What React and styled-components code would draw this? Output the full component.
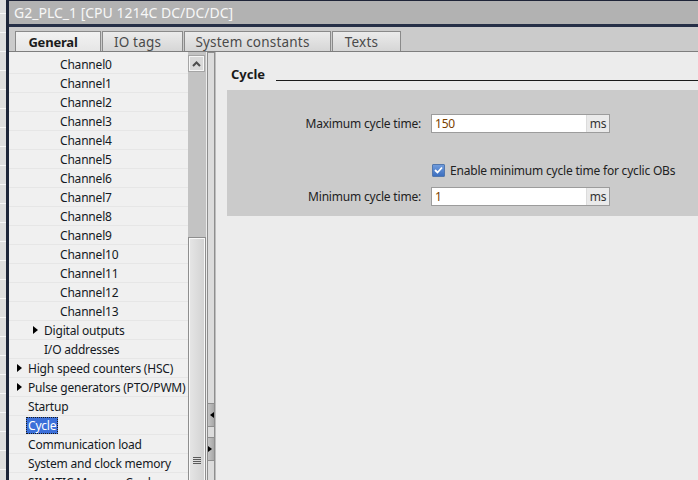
import React from 'react';
import styled, { createGlobalStyle } from 'styled-components';

const GlobalStyle = createGlobalStyle`
  html, body {
    margin: 0;
    padding: 0;
    overflow: hidden;
    background: #ececec;
  }
  body {
    font-family: "Noto Sans", "Open Sans", sans-serif;
    font-size: 12px;
    letter-spacing: -0.2px;
  }
`;

const Screen = styled.div`
  display: flex;
  width: 698px;
  height: 480px;
  overflow: hidden;
`;

const OuterStrip = styled.div`
  width: 6px;
  flex-shrink: 0;
  background: repeating-linear-gradient(
    to bottom,
    #dedede 0px,
    #dedede 18px,
    #f7f7f7 18px,
    #f7f7f7 19px
  );
  background-position: 0 -5px;
`;

const Window = styled.div`
  flex: 1;
  display: flex;
  flex-direction: column;
  border-left: 3px solid #1d2538;
  min-width: 0;
`;

const TitleBar = styled.div`
  height: 23px;
  border-top: 1px solid #1e2438;
  border-bottom: 3px solid #262f47;
  background: #b2b2b2;
  color: #f7f7f7;
  font-size: 14px;
  letter-spacing: 0;
  line-height: 23px;
  padding-left: 5px;
  white-space: nowrap;
`;

const TabStrip = styled.div`
  height: 24px;
  background: #cbcbcb;
  border-bottom: 1px solid #7e7e7e;
  display: flex;
  align-items: flex-end;
  padding-left: 6px;
`;

const Tab = styled.div`
  height: 20px;
  width: ${(p) => p.$w}px;
  box-sizing: border-box;
  border: 1px solid #8a8a8a;
  border-bottom: none;
  margin-right: 1px;
  padding-right: 10px;
  text-align: center;
  line-height: 20px;
  font-size: ${(p) => (p.$active ? 13 : 13.5)}px;
  letter-spacing: ${(p) => (p.$active ? -0.2 : 0.2)}px;
  color: ${(p) => (p.$active ? '#1b1b1b' : '#4a4a4a')};
  font-weight: ${(p) => (p.$active ? 700 : 400)};
  background: ${(p) =>
    p.$active
      ? 'linear-gradient(#f2f2f2, #e6e6e6)'
      : 'linear-gradient(#ebebeb, #d6d6d6)'};
  white-space: nowrap;
`;

const Body = styled.div`
  flex: 1;
  display: flex;
  min-height: 0;
`;

const Tree = styled.div`
  width: 179px;
  flex-shrink: 0;
  background: #f0f0f0;
  padding-top: 3px;
  overflow: hidden;
`;

const Row = styled.div`
  height: 18px;
  border-bottom: 1px solid #e6e6e6;
  display: flex;
  align-items: center;
  padding-left: ${(p) => 8 + p.$level * 16}px;
  color: #141923;
  white-space: nowrap;
`;

const Expander = styled.span`
  width: 11px;
  flex-shrink: 0;
  display: flex;
  align-items: center;
`;

const Label = styled.span`
  padding: 0 1px;
  line-height: 15px;
  border: 1px dotted ${(p) => (p.$selected ? '#1a1a1a' : 'transparent')};
  background: ${(p) => (p.$selected ? '#3b6fd9' : 'transparent')};
  color: ${(p) => (p.$selected ? '#ffffff' : 'inherit')};
  margin-left: -2px;
`;

const ScrollBar = styled.div`
  width: 18px;
  flex-shrink: 0;
  background: #c3c3c3;
  display: flex;
  flex-direction: column;
  padding-top: 3px;
  box-sizing: border-box;
`;

const UpButton = styled.div`
  height: 17px;
  box-sizing: border-box;
  border: 1px solid #a5a5a5;
  box-shadow: inset 0 0 0 1px #f6f6f6;
  background: #d9d9d9;
  display: flex;
  align-items: center;
  justify-content: center;
  margin-right: 1px;
`;

const Track = styled.div`
  height: 165px;
`;

const Thumb = styled.div`
  flex: 1;
  box-sizing: border-box;
  border: 1px solid #8e8e8e;
  border-bottom: none;
  box-shadow: inset 1px 1px 0 #f8f8f8, inset -1px 0 0 #f8f8f8;
  background: linear-gradient(to right, #e6e6e6, #d2d2d2);
  display: flex;
  align-items: flex-end;
  justify-content: center;
  padding-bottom: 16px;
`;

const Grip = styled.div`
  width: 8px;
  height: 7px;
  background: repeating-linear-gradient(
    to bottom,
    #5a5a5a 0px,
    #5a5a5a 1px,
    transparent 1px,
    transparent 2px
  );
`;

const Splitter = styled.div`
  width: 6px;
  flex-shrink: 0;
  margin-left: 1px;
  border: 1px solid #8e8e8e;
  border-bottom: none;
  background: #dcdcdc;
  display: flex;
  flex-direction: column;
  padding-top: 350px;
`;

const SplitArrow = styled.div`
  height: 22px;
  background: linear-gradient(to right, #c4c4c4, #a8a8a8);
  border-top: 1px solid #8e8e8e;
  border-bottom: 1px solid #8e8e8e;
  margin-bottom: 10px;
  display: flex;
  align-items: center;
  justify-content: ${(p) => (p.$dir === 'left' ? 'flex-end' : 'flex-start')};
`;

const Content = styled.div`
  flex: 1;
  background: #ececec;
  border-left: 1px solid #bdbdbd;
  min-width: 0;
`;

const HeadingRow = styled.div`
  display: flex;
  align-items: center;
  height: 16px;
  margin-top: 14px;
  padding-left: 15px;
`;

const Heading = styled.span`
  font-weight: 700;
  font-size: 13px;
  letter-spacing: 0;
  color: #1a1a1a;
`;

const HeadingLine = styled.div`
  flex: 1;
  height: 1px;
  background: #1c1c1c;
  margin-left: 11px;
  align-self: flex-end;
  margin-bottom: 1px;
`;

const Section = styled.div`
  margin: 8px 0 0 11px;
  background: #cbcbcb;
  padding: 24px 0 10px 0;
  display: flex;
  flex-direction: column;
`;

const FieldRow = styled.div`
  display: flex;
  align-items: center;
  height: 19px;
  margin-bottom: ${(p) => p.$gap || 0}px;
`;

const FieldLabel = styled.span`
  width: 194px;
  text-align: right;
  margin-right: 10px;
  color: #222;
`;

const InputBox = styled.div`
  width: 179px;
  height: 19px;
  box-sizing: border-box;
  border: 1px solid #9c9c9c;
  background: #ffffff;
  display: flex;
`;

const Value = styled.span`
  flex: 1;
  padding-left: 3px;
  line-height: 17px;
  color: #7a3f00;
`;

const Unit = styled.span`
  width: 22px;
  background: #eaeaea;
  border-left: 1px solid #dcdcdc;
  text-align: center;
  line-height: 17px;
  color: #333;
`;

const CheckRow = styled.div`
  display: flex;
  align-items: center;
  height: 16px;
  padding-left: 205px;
  margin-bottom: 9px;
  color: #222;
`;

const CheckBox = styled.span`
  width: 13px;
  height: 13px;
  box-sizing: border-box;
  border: 1px solid #5277ad;
  background: linear-gradient(#6f9bdc, #3c6fc0);
  border-radius: 1px;
  display: flex;
  align-items: center;
  justify-content: center;
  margin-right: 5px;
`;

const Triangle = ({ dir = 'right', size = 4 }) => (
  <svg width={size + 1} height={size * 2} viewBox={`0 0 ${size + 1} ${size * 2}`}>
    {dir === 'right' ? (
      <polygon points={`0,0 ${size + 1},${size} 0,${size * 2}`} fill="#000" />
    ) : (
      <polygon points={`${size + 1},0 0,${size} ${size + 1},${size * 2}`} fill="#000" />
    )}
  </svg>
);

const treeItems = [
  ...Array.from({ length: 14 }, (_, i) => ({ label: `Channel${i}`, level: 2 })),
  { label: 'Digital outputs', level: 1, expandable: true },
  { label: 'I/O addresses', level: 1 },
  { label: 'High speed counters (HSC)', level: 0, expandable: true },
  { label: 'Pulse generators (PTO/PWM)', level: 0, expandable: true },
  { label: 'Startup', level: 0 },
  { label: 'Cycle', level: 0, selected: true },
  { label: 'Communication load', level: 0 },
  { label: 'System and clock memory', level: 0 },
  { label: 'SIMATIC Memory Card', level: 0 },
];

const tabs = [
  { label: 'General', w: 86, active: true },
  { label: 'IO tags', w: 81 },
  { label: 'System constants', w: 147 },
  { label: 'Texts', w: 69 },
];

const App = () => (
  <>
    <GlobalStyle />
    <Screen>
      <OuterStrip />
      <Window>
        <TitleBar>G2_PLC_1 [CPU 1214C DC/DC/DC]</TitleBar>
        <TabStrip>
          {tabs.map((t) => (
            <Tab key={t.label} $w={t.w} $active={t.active}>
              {t.label}
            </Tab>
          ))}
        </TabStrip>
        <Body>
          <Tree>
            {treeItems.map((item) => (
              <Row key={item.label} $level={item.level}>
                <Expander>{item.expandable && <Triangle />}</Expander>
                <Label $selected={item.selected}>{item.label}</Label>
              </Row>
            ))}
          </Tree>
          <ScrollBar>
            <UpButton>
              <svg width="9" height="6" viewBox="0 0 9 6">
                <polyline points="1,5 4.5,1.5 8,5" fill="none" stroke="#4d4d4d" strokeWidth="2" />
              </svg>
            </UpButton>
            <Track />
            <Thumb>
              <Grip />
            </Thumb>
          </ScrollBar>
          <Splitter>
            <SplitArrow $dir="left">
              <Triangle dir="left" size={3} />
            </SplitArrow>
            <SplitArrow $dir="right">
              <Triangle dir="right" size={3} />
            </SplitArrow>
          </Splitter>
          <Content>
            <HeadingRow>
              <Heading>Cycle</Heading>
              <HeadingLine />
            </HeadingRow>
            <Section>
              <FieldRow $gap={29}>
                <FieldLabel>Maximum cycle time:</FieldLabel>
                <InputBox>
                  <Value>150</Value>
                  <Unit>ms</Unit>
                </InputBox>
              </FieldRow>
              <CheckRow>
                <CheckBox>
                  <svg width="9" height="8" viewBox="0 0 9 8">
                    <polyline points="1,4 3.5,6.5 8,1.5" fill="none" stroke="#fff" strokeWidth="1.8" />
                  </svg>
                </CheckBox>
                Enable minimum cycle time for cyclic OBs
              </CheckRow>
              <FieldRow>
                <FieldLabel>Minimum cycle time:</FieldLabel>
                <InputBox>
                  <Value>1</Value>
                  <Unit>ms</Unit>
                </InputBox>
              </FieldRow>
            </Section>
          </Content>
        </Body>
      </Window>
    </Screen>
  </>
);

export default App;
